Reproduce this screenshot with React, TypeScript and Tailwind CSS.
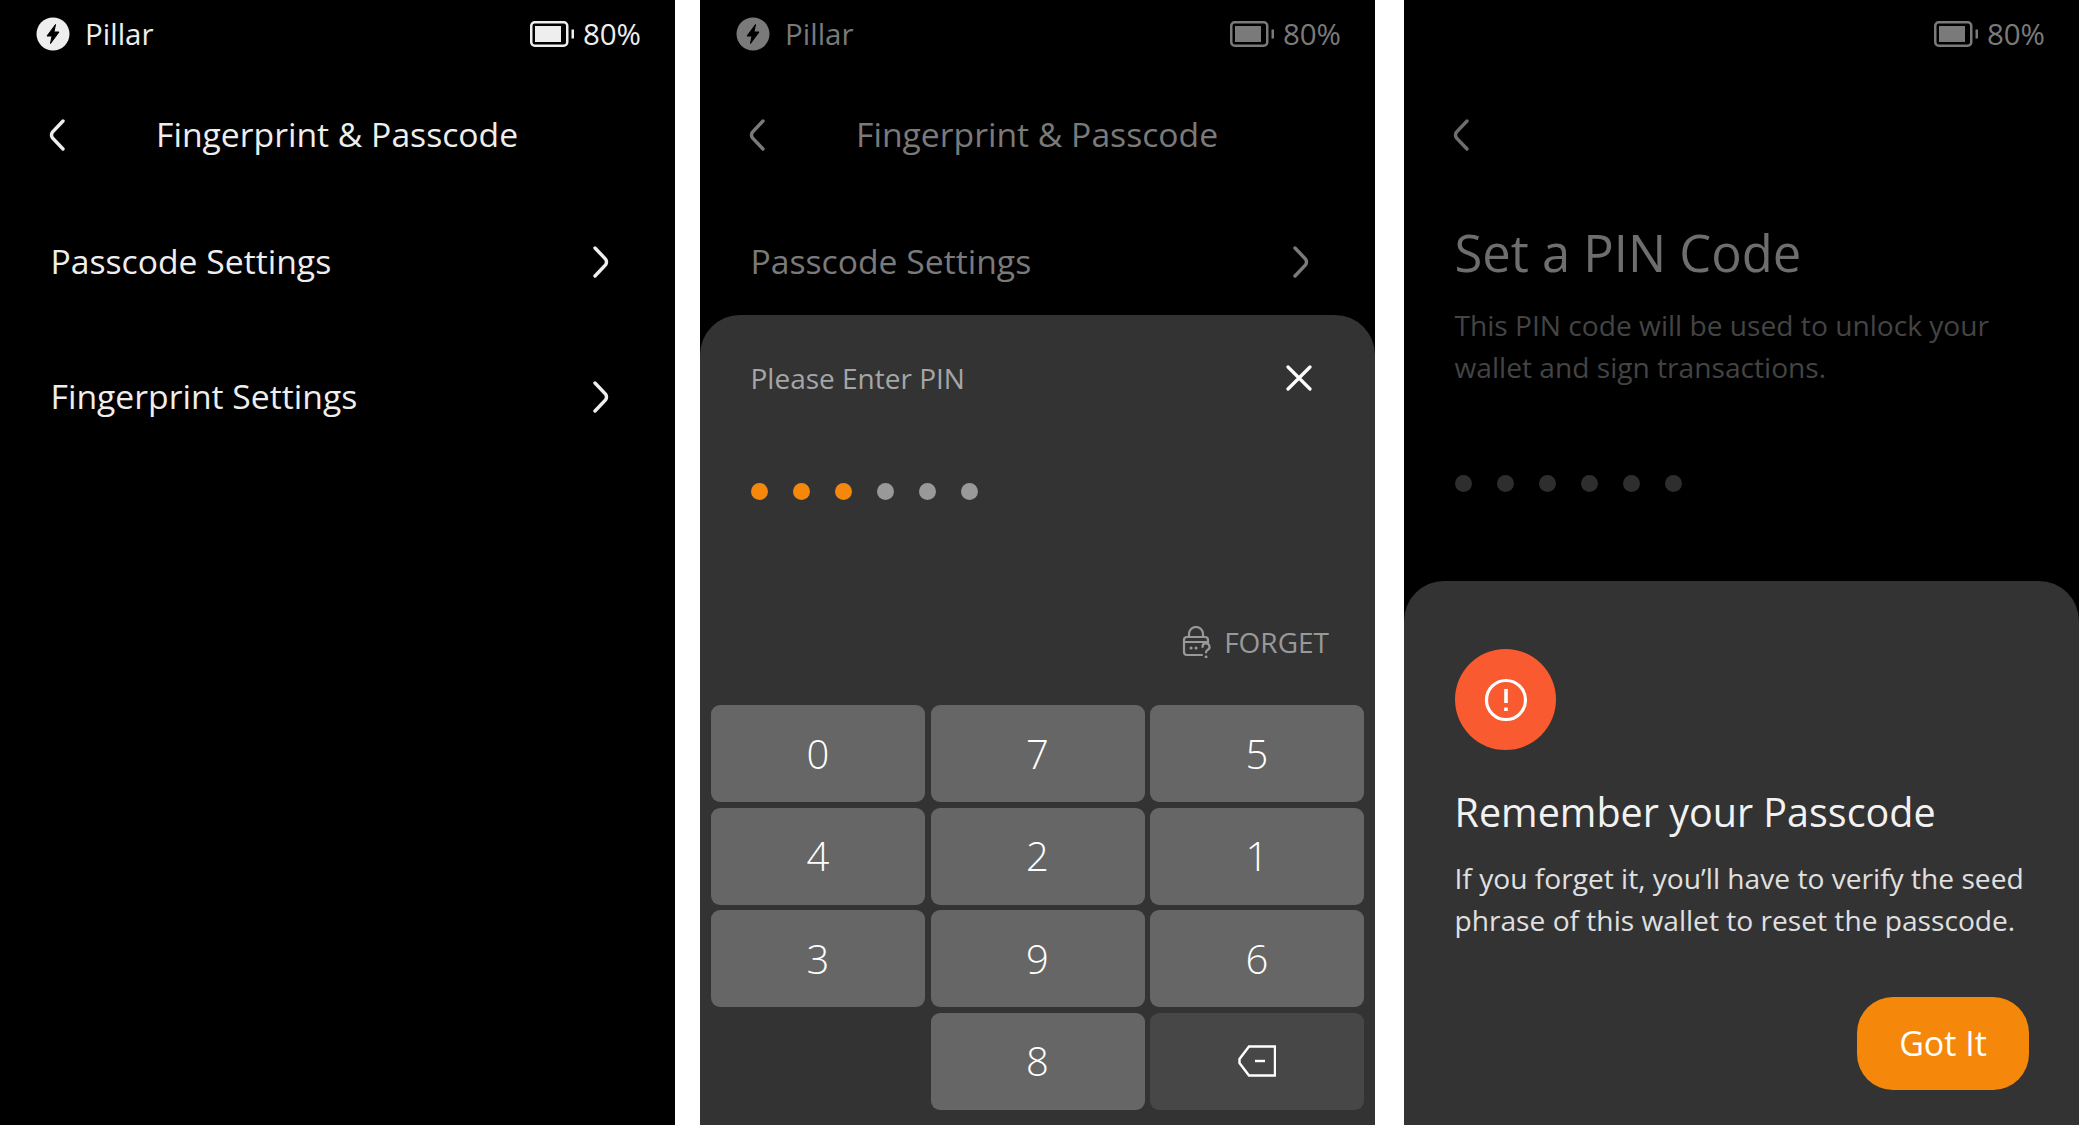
import React from "react"

function Bolt() {
  return (
    <svg width="34" height="34" viewBox="0 0 34 34">
      <circle cx="17" cy="17" r="16.5" fill="currentColor" />
      <path d="M19.5 7.5 L11 19 H16 L14.5 26.5 L23 15 H18 Z" fill="#000" stroke="#000" strokeWidth="1" strokeLinejoin="round" />
    </svg>
  )
}

function Battery({ fill }: { fill: string }) {
  return (
    <svg width="44" height="26" viewBox="0 0 44 26" fill="none">
      <rect x="1.25" y="1.25" width="36" height="23.5" rx="3.5" stroke="currentColor" strokeWidth="2.5" />
      <rect x="5" y="5" width="26" height="16" fill={fill} />
      <rect x="41.5" y="8.5" width="2.5" height="9" fill="currentColor" />
    </svg>
  )
}

function StatusBar({ logo, color, fill }: { logo?: boolean; color: string; fill: string }) {
  return (
    <div className={`h-[68px] flex items-center justify-between pl-[36px] pr-[34px] text-[29.500px] ${color}`}>
      {logo ? (
        <div className="flex items-center gap-[15px]">
          <Bolt />
          <span className="font-medium">Pillar</span>
        </div>
      ) : (
        <div />
      )}
      <div className="flex items-center gap-[9px]">
        <Battery fill={fill} />
        <span>80%</span>
      </div>
    </div>
  )
}

function Back({ color }: { color: string }) {
  return (
    <svg className={color} width="16" height="32" viewBox="0 0 16 32" fill="none">
      <path d="M14 2 L3.500 13 Q1.500 16 3.500 19 L14 30" stroke="currentColor" strokeWidth="3.400" strokeLinecap="round" />
    </svg>
  )
}

function Forward({ color }: { color: string }) {
  return (
    <svg className={color} width="16" height="32" viewBox="0 0 16 32" fill="none">
      <path d="M2 2 L12.500 13 Q14.500 16 12.500 19 L2 30" stroke="currentColor" strokeWidth="3.400" strokeLinecap="round" />
    </svg>
  )
}

function Header({ color }: { color: string }) {
  return (
    <div className={`mt-[37px] h-[60px] flex items-center pl-[49px] text-[33.700px] ${color}`}>
      <Back color={color} />
      <span className="ml-[91px] pb-[2px]">Fingerprint &amp; Passcode</span>
    </div>
  )
}

function Row({ label, color, className }: { label: string; color: string; className: string }) {
  return (
    <div className={`h-[100px] flex items-center justify-between pl-[50.500px] pr-[66px] text-[33.700px] ${color} ${className}`}>
      <span className="pb-[2px]">{label}</span>
      <Forward color={color} />
    </div>
  )
}

function LockIcon() {
  return (
    <svg width="30" height="32" viewBox="0 0 30 32" fill="none" stroke="#999" strokeWidth="2.200" strokeLinecap="round">
      <path d="M7 11 V8 a7 7 0 0 1 14 0 V11" />
      <path d="M20 29 H5 a3 3 0 0 1 -3 -3 V14 a3 3 0 0 1 3 -3 H23 a3 3 0 0 1 3 3 V16" />
      <path d="M2 16 H26" />
      <path d="M9 22 h0.100 M14 22 h0.100" strokeWidth="3" />
      <path d="M20.500 21 a3.500 3.500 0 1 1 5 3 q-1.500 .8 -1.500 2.500" />
      <path d="M24 31 h0.100" strokeWidth="2.800" />
    </svg>
  )
}

function BackspaceIcon() {
  return (
    <svg width="38" height="32" viewBox="0 0 38 32" fill="none" stroke="#fff" strokeWidth="2.400">
      <path d="M37 1.500 V30.500 H11 L1.500 18 V14 L11 1.500 Z" />
      <path d="M17 16 H27" />
    </svg>
  )
}

function AlertIcon() {
  return (
    <svg width="44" height="44" viewBox="0 0 44 44" fill="none" stroke="#fff" strokeWidth="3.200">
      <circle cx="22" cy="22" r="19.500" />
      <path d="M22 11 V25" strokeWidth="3.600" />
      <path d="M22 29.500 V33" strokeWidth="3.600" />
    </svg>
  )
}

function Key({ children, dark }: { children: React.ReactNode; dark?: boolean }) {
  return (
    <div className={`h-[97px] rounded-[9px] flex items-center justify-center text-[40px] font-[350] text-white ${dark ? "bg-[#474747]" : "bg-[#666666]"}`}>
      {children}
    </div>
  )
}

function Dots({ colors }: { colors: string[] }) {
  return (
    <div className="flex gap-[25px]">
      {colors.map((c, i) => (
        <div key={i} className={`w-[17px] h-[17px] rounded-full ${c}`} />
      ))}
    </div>
  )
}

export default function App() {
  const digits = ["0", "7", "5", "4", "2", "1", "3", "9", "6"]

  return (
    <div className="w-[2079px] h-[1125px] bg-white flex overflow-hidden font-['Open_Sans',sans-serif]">
      {/* settings list */}
      <div className="w-[675px] h-full bg-black flex flex-col">
        <StatusBar logo color="text-[#eeeeee]" fill="#eeeeee" />
        <Header color="text-[#eeeeee]" />
        <Row label="Passcode Settings" color="text-[#eeeeee]" className="mt-[47px]" />
        <Row label="Fingerprint Settings" color="text-[#eeeeee]" className="mt-[35px]" />
      </div>

      {/* enter pin */}
      <div className="ml-[25px] w-[675px] h-full bg-black flex flex-col">
        <StatusBar logo color="text-[#7a7a7a]" fill="#7a7a7a" />
        <Header color="text-[#7a7a7a]" />
        <Row label="Passcode Settings" color="text-[#7a7a7a]" className="mt-[47px]" />
        <div className="mt-auto h-[810px] bg-[#333333] rounded-t-[40px] pt-[43px]">
          <div className="pl-[50.500px] pr-[63px] h-[40px] flex items-center justify-between">
            <span className="text-[28px] text-[#a6a6a6]">Please Enter PIN</span>
            <svg width="26" height="26" viewBox="0 0 26 26" stroke="#fff" strokeWidth="3.200" strokeLinecap="round">
              <path d="M2 2 L24 24 M24 2 L2 24" />
            </svg>
          </div>
          <div className="mt-[85px] pl-[51px]">
            <Dots colors={["bg-[#f5880a]", "bg-[#f5880a]", "bg-[#f5880a]", "bg-[#999999]", "bg-[#999999]", "bg-[#999999]"]} />
          </div>
          <div className="mt-[122px] h-[40px] flex items-center justify-end gap-[12px] pr-[46px] text-[28px] text-[#999999]">
            <LockIcon />
            <span>FORGET</span>
          </div>
          <div className="mt-[43px] px-[11px] grid grid-cols-3 gap-x-[5.500px] gap-y-[5.600px]">
            {digits.map((d) => (
              <Key key={d}>{d}</Key>
            ))}
            <div />
            <Key>8</Key>
            <Key dark>
              <BackspaceIcon />
            </Key>
          </div>
        </div>
      </div>

      {/* set pin + reminder */}
      <div className="ml-[29px] w-[675px] h-full bg-black flex flex-col">
        <StatusBar color="text-[#7a7a7a]" fill="#7a7a7a" />
        <div className="mt-[37px] h-[60px] flex items-center pl-[49px]">
          <Back color="text-[#6e6e6e]" />
        </div>
        <div className="mt-[53px] pl-[50.500px] text-[50.700px] leading-[70px] text-[#6e6e6e]">Set a PIN Code</div>
        <div className="mt-[16px] pl-[50.500px] text-[28.150px] leading-[42px] text-[#444444]">
          This PIN code will be used to unlock your
          <br />
          wallet and sign transactions.
        </div>
        <div className="mt-[87px] pl-[51px]">
          <Dots colors={["bg-[#2e2e2e]", "bg-[#2e2e2e]", "bg-[#2e2e2e]", "bg-[#2e2e2e]", "bg-[#2e2e2e]", "bg-[#2e2e2e]"]} />
        </div>
        <div className="mt-auto h-[544px] bg-[#333333] rounded-t-[40px] pt-[68px] px-[51px]">
          <div className="w-[101px] h-[101px] rounded-full bg-[#f95a30] flex items-center justify-center">
            <AlertIcon />
          </div>
          <div className="mt-[37px] text-[39.500px] leading-[50px] text-[#f2f2f2] -ml-[0.500px]">Remember your Passcode</div>
          <div className="mt-[20px] text-[28.150px] leading-[42px] text-[#e0e0e0] -ml-[0.500px]">
            If you forget it, you’ll have to verify the seed
            <br />
            phrase of this wallet to reset the passcode.
          </div>
          <div className="mt-[56px] flex justify-end">
            <div className="w-[172px] h-[93px] -mr-[1px] rounded-[36px] bg-[#f5880a] flex items-center justify-center text-[34px] text-white">
              Got It
            </div>
          </div>
        </div>
      </div>
    </div>
  )
}
